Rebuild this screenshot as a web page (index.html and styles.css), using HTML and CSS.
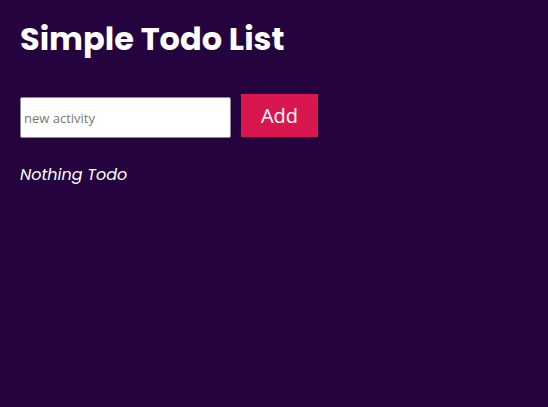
FILE: index.html
```html
<!DOCTYPE html>
<html>
<head>
<meta charset="utf-8">
<link rel="stylesheet" href="styles.css">
</head>
<body>
<div class="app">
  <h1 class="title">Simple Todo List</h1>
  <form class="add-form">
    <input class="add-input" type="text" placeholder="new activity">
    <button class="add-btn" type="button">Add</button>
  </form>
  <p class="empty">Nothing Todo</p>
</div>
</body>
</html>
```
FILE: styles.css
```css
html, body {
  margin: 0;
  padding: 0;
  background: #24033f;
  height: 100%;
}
.app {
  padding: 20px 20px;
  font-family: "Poppins", "Inter", "Open Sans", sans-serif;
  color: #fff;
}
.title {
  margin: 0;
  font-size: 32px;
  font-weight: 700;
  line-height: 38px;
}
.add-form {
  display: flex;
  align-items: center;
  gap: 10px;
  margin-top: 35px;
}
.add-input {
  box-sizing: border-box;
  width: 211px;
  height: 41px;
  margin-top: 4px;
  border: 1px solid #8a8a99;
  border-radius: 2px;
  padding: 0 3px;
  font-family: "Open Sans", sans-serif;
  font-size: 13px;
  color: #333;
}
.add-input::placeholder { color: #777; }
.add-btn {
  width: 77px;
  height: 43px;
  border: none;
  background: #d8174f;
  color: #fff;
  font-family: "Open Sans", sans-serif;
  font-size: 20px;
  padding: 0;
}
.empty {
  margin: 24px 0 0;
  font-style: italic;
  font-size: 16px;
  color: #fff;
}
```
